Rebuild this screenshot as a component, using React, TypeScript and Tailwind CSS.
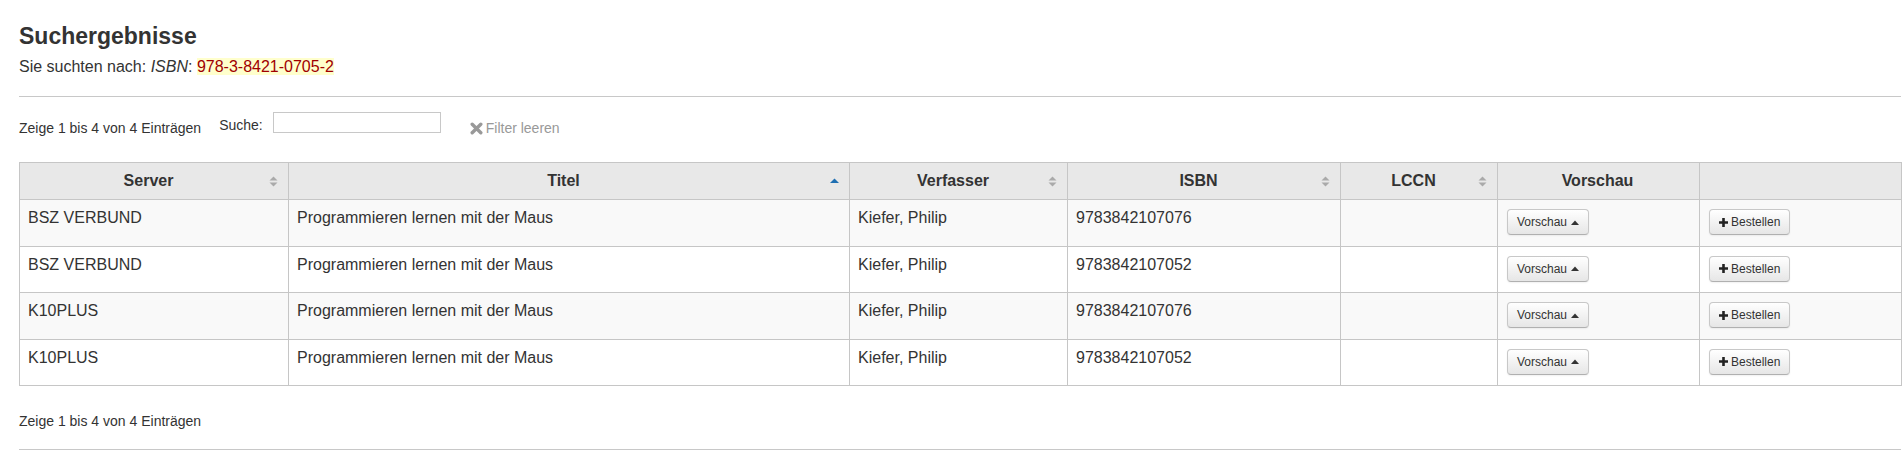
import React from "react";

type Row = {
  server: string;
  title: string;
  author: string;
  isbn: string;
  lccn: string;
};

const rows: Row[] = [
  { server: "BSZ VERBUND", title: "Programmieren lernen mit der Maus", author: "Kiefer, Philip", isbn: "9783842107076", lccn: "" },
  { server: "BSZ VERBUND", title: "Programmieren lernen mit der Maus", author: "Kiefer, Philip", isbn: "9783842107052", lccn: "" },
  { server: "K10PLUS", title: "Programmieren lernen mit der Maus", author: "Kiefer, Philip", isbn: "9783842107076", lccn: "" },
  { server: "K10PLUS", title: "Programmieren lernen mit der Maus", author: "Kiefer, Philip", isbn: "9783842107052", lccn: "" },
];

// grau: beide Richtungen, blau: aktiv aufsteigend
function SortIcon({ active }: { active?: boolean }) {
  if (active) {
    return (
      <svg width="9" height="12" viewBox="0 0 9 12" className="shrink-0">
        <path d="M0 8 L4.5 3.5 L9 8 Z" fill="#1f6fb2" />
      </svg>
    );
  }
  return (
    <svg width="9" height="13" viewBox="0 0 9 13" className="shrink-0">
      <path d="M0.5 5.5 L4.5 1.5 L8.5 5.5 Z" fill="#aaaaaa" />
      <path d="M0.5 7.5 L4.5 11.5 L8.5 7.5 Z" fill="#aaaaaa" />
    </svg>
  );
}

function Th({ label, sort, active }: { label: string; sort?: boolean; active?: boolean }) {
  return (
    <th className="border border-[#c6c6c6] bg-[#e8e8e8] pl-[8px] pr-[10px] py-[8px] h-[36px] font-bold text-[16px] leading-[20px] text-[#333]">
      <div className="flex items-center">
        <span className="flex-1 text-center">{label}</span>
        {sort && <SortIcon active={active} />}
      </div>
    </th>
  );
}

function Btn({ children }: { children: React.ReactNode }) {
  return (
    <button className="mt-[1px] inline-flex items-center h-[26px] px-[9px] text-[12px] leading-[16px] text-[#333] rounded-[4px] border border-[#c8c8c8] border-b-[#b0b0b0] bg-gradient-to-b from-white to-[#e6e6e6] shadow-[0_1px_2px_rgba(0,0,0,0.06)]">
      {children}
    </button>
  );
}

export default function App() {
  return (
    <div className="pl-[19px] pr-[3px] pb-[2px] font-['Liberation_Sans',Arial,sans-serif] text-[#333] bg-white">
      <h1 className="pt-[23px] text-[23px] leading-[26px] font-bold text-[#333]">Suchergebnisse</h1>
      <p className="mt-[8px] text-[16px] leading-[20px]">
        Sie suchten nach: <em>ISBN</em>: <span className="bg-[#ffffcc] text-[#a00000]">978-3-8421-0705-2</span>
      </p>
      <div className="mt-[19px] border-t border-[#c8c8c8]" />

      <div className="mt-[15px] flex items-start text-[14px] leading-[20px]">
        <div className="mt-[6px]">Zeige 1 bis 4 von 4 Einträgen</div>
        <label className="ml-[18px] flex items-start">
          <span className="mt-[3px]">Suche:</span>
          <input className="ml-[10px] w-[168px] h-[21px] border border-[#c8c8c8] outline-none px-1 text-[14px]" />
        </label>
        <div className="ml-[29px] mt-[6px] flex items-center text-[#999]">
          <svg width="13" height="13" viewBox="0 0 13 13" className="mr-[3px]">
            <path d="M2.2 2.2 L10.8 10.8 M10.8 2.2 L2.2 10.8" stroke="#999" strokeWidth="3.4" strokeLinecap="round" />
          </svg>
          Filter leeren
        </div>
      </div>

      <table className="mt-[24px] w-[1882px] table-fixed border-collapse border border-[#c6c6c6]">
        <colgroup>
          <col className="w-[269px]" />
          <col className="w-[561px]" />
          <col className="w-[218px]" />
          <col className="w-[273px]" />
          <col className="w-[157px]" />
          <col className="w-[202px]" />
          <col className="w-[202px]" />
        </colgroup>
        <thead>
          <tr>
            <Th label="Server" sort />
            <Th label="Titel" sort active />
            <Th label="Verfasser" sort />
            <Th label="ISBN" sort />
            <Th label="LCCN" sort />
            <Th label="Vorschau" />
            <Th label="" />
          </tr>
        </thead>
        <tbody>
          {rows.map((r, i) => (
            <tr key={i} className={i % 2 === 0 ? "bg-[#f9f9f9]" : "bg-white"}>
              <td className="border border-[#c6c6c6] align-top p-[8px] h-[46.6px] text-[16px] leading-[20px]">{r.server}</td>
              <td className="border border-[#c6c6c6] align-top p-[8px] text-[16px] leading-[20px]">{r.title}</td>
              <td className="border border-[#c6c6c6] align-top p-[8px] text-[16px] leading-[20px]">{r.author}</td>
              <td className="border border-[#c6c6c6] align-top p-[8px] text-[16px] leading-[20px]">{r.isbn}</td>
              <td className="border border-[#c6c6c6] align-top p-[8px] text-[16px] leading-[20px]">{r.lccn}</td>
              <td className="border border-[#c6c6c6] align-top p-[8px] pl-[9px]">
                <Btn>
                  Vorschau
                  <svg width="8" height="5" viewBox="0 0 8 5" className="ml-[4px]">
                    <path d="M0 5 L4 0.5 L8 5 Z" fill="#333" />
                  </svg>
                </Btn>
              </td>
              <td className="border border-[#c6c6c6] align-top p-[8px] pl-[9px]">
                <Btn>
                  <svg width="9" height="9" viewBox="0 0 9 9" className="mr-[3px]">
                    <path d="M3.2 0 H5.8 V3.2 H9 V5.8 H5.8 V9 H3.2 V5.8 H0 V3.2 H3.2 Z" fill="#222" />
                  </svg>
                  Bestellen
                </Btn>
              </td>
            </tr>
          ))}
        </tbody>
      </table>

      <div className="mt-[25px] text-[14px] leading-[20px]">Zeige 1 bis 4 von 4 Einträgen</div>
      <div className="mt-[18px] border-t border-[#c8c8c8]" />
    </div>
  );
}
